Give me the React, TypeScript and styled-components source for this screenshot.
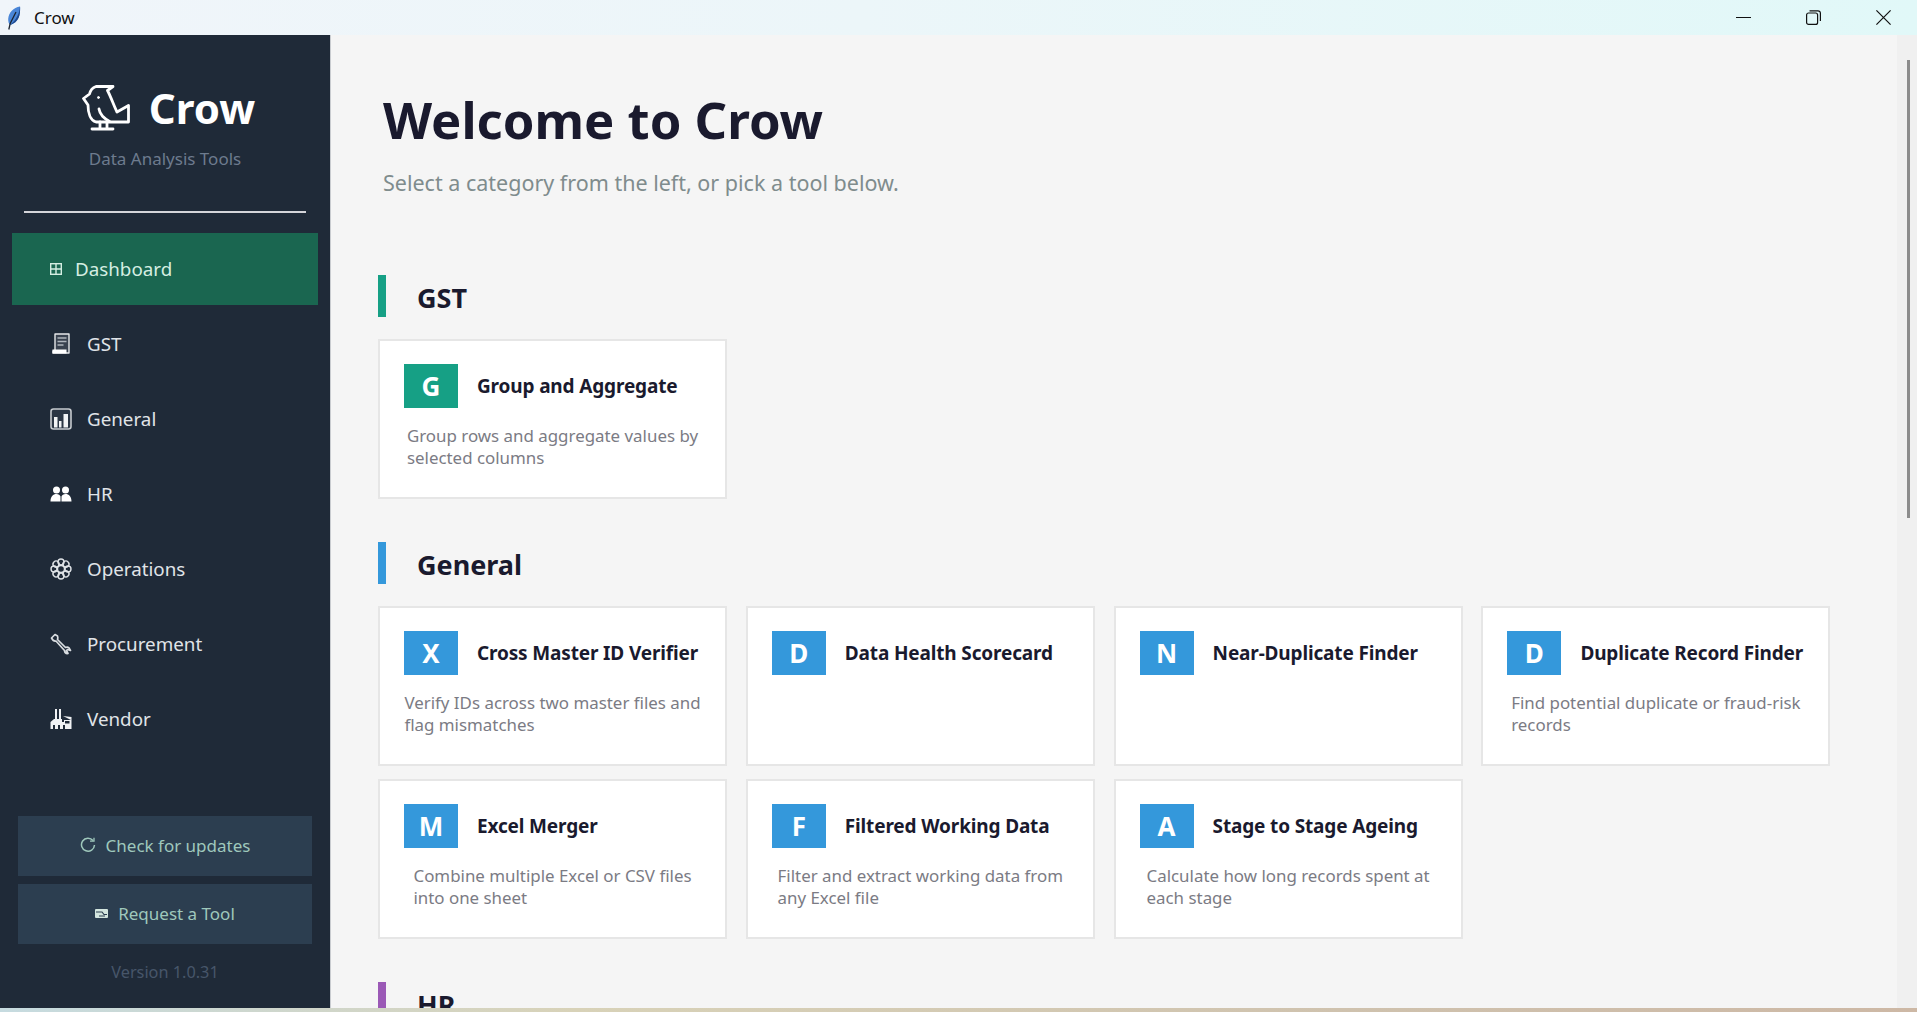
import React from 'react';
import styled, { createGlobalStyle } from 'styled-components';

const GlobalStyle = createGlobalStyle`
  html, body, #root {
    margin: 0;
    height: 100%;
  }

  body {
    overflow: hidden;
    font-family: "Noto Sans", "Open Sans", sans-serif;
    background: #f5f5f5;
  }
`;

const Window = styled.div`
  display: flex;
  flex-direction: column;
  width: 1917px;
  height: 1012px;
  overflow: hidden;
`;

const TitleBar = styled.div`
  display: flex;
  align-items: center;
  flex: 0 0 35px;
  padding-left: 7px;
  background: linear-gradient(90deg, #f0f5fa 0%, #ecf6f9 45%, #e1f8f8 100%);
`;

const WindowTitle = styled.span`
  margin-left: 13px;
  font-size: 17px;
  color: #111;
`;

const WindowControls = styled.div`
  display: flex;
  align-items: center;
  margin-left: auto;
  padding-right: 26px;
  gap: 55px;
`;

const Body = styled.div`
  display: flex;
  flex: 0 0 973px;
  min-height: 0;
`;

const Sidebar = styled.aside`
  display: flex;
  flex-direction: column;
  flex: 0 0 331px;
  box-sizing: border-box;
  background: #1f2a38;
  border-right: 1px solid #c9ccd0;
`;

const Brand = styled.div`
  display: flex;
  flex-direction: column;
  align-items: center;
  height: 176px;
  box-sizing: border-box;
  padding-top: 50px;
`;

const BrandRow = styled.div`
  display: flex;
  align-items: center;
  gap: 19px;
  height: 45px;
  padding-left: 7px;
`;

const BrandName = styled.span`
  font-size: 42px;
  font-weight: 700;
  line-height: 45px;
  color: #fff;
`;

const BrandTagline = styled.span`
  margin-top: 17px;
  font-size: 17px;
  line-height: 24px;
  color: #6d7b8e;
`;

const Divider = styled.div`
  flex: 0 0 2px;
  margin: 0 24px 20px;
  background: #d4d5da;
`;

const NavItem = styled.div<{ $active?: boolean }>`
  display: flex;
  align-items: center;
  flex: 0 0 72px;
  margin: 0 12px 3px;
  padding-left: 38px;
  gap: ${p => (p.$active ? '13px' : '15px')};
  font-size: 18.8px;
  color: ${p => (p.$active ? '#d5eee2' : '#e0e4e8')};
  background: ${p => (p.$active ? '#1a6650' : 'transparent')};
`;

const SidebarFooter = styled.div`
  display: flex;
  flex-direction: column;
  margin-top: auto;
  padding: 0 18px;
  gap: 8px;
`;

const FooterButton = styled.div`
  display: flex;
  align-items: center;
  justify-content: center;
  height: 60px;
  box-sizing: border-box;
  padding-bottom: 2px;
  gap: 10px;
  font-size: 17px;
  color: #9fc8bc;
  background: #2c3e50;
`;

const Version = styled.div`
  height: 40px;
  margin-bottom: 16px;
  font-size: 16.3px;
  line-height: 40px;
  text-align: center;
  color: #47566a;
`;

const Main = styled.main`
  flex: 1;
  min-width: 0;
  overflow: hidden;
  padding: 50px 0 0 47px;
  background: #f5f5f5;
`;

const PageTitle = styled.h1`
  margin: 0 0 0 5px;
  font-size: 50.8px;
  font-weight: 700;
  line-height: 70px;
  color: #1a1a2e;
`;

const PageSubtitle = styled.p`
  margin: 12px 0 76px 5px;
  font-size: 21.5px;
  line-height: 32px;
  color: #7f8c8d;
`;

const Section = styled.section`
  margin-bottom: 43.5px;
`;

const SectionHeader = styled.div<{ $accent: string }>`
  display: flex;
  align-items: center;
  height: 40px;
  margin-bottom: 21.5px;
  padding: 2px 0 0 31px;
  border-left: 8px solid ${p => p.$accent};
  font-size: 27px;
  font-weight: 700;
  color: #1a1a2e;
`;

const CardGrid = styled.div`
  display: grid;
  grid-template-columns: repeat(4, 349px);
  grid-auto-rows: 160px;
  column-gap: 18.8px;
  row-gap: 13px;
`;

const Card = styled.article`
  box-sizing: border-box;
  padding: 23px 24px;
  background: #fff;
  border: 2px solid #e6e6e6;
`;

const CardHead = styled.div`
  display: flex;
  align-items: center;
  gap: 19px;
`;

const CardBadge = styled.div<{ $color: string }>`
  display: flex;
  align-items: center;
  justify-content: center;
  flex: 0 0 54px;
  height: 44px;
  font-size: 26px;
  font-weight: 700;
  color: #fff;
  background: ${p => p.$color};
`;

const CardTitle = styled.h3`
  margin: 0;
  font-size: 19px;
  font-weight: 700;
  letter-spacing: -0.15px;
  white-space: nowrap;
  color: #1a1a2e;
`;

const CardDesc = styled.p`
  width: fit-content;
  margin: 17px auto 0;
  font-size: 16.9px;
  line-height: 22.5px;
  white-space: nowrap;
  color: #7b7b84;
`;

const ScrollTrack = styled.div`
  flex: 0 0 20px;
  box-sizing: border-box;
  padding: 25px 7px 0 10px;
  background: #f0f0f0;
`;

const ScrollThumb = styled.div`
  height: 458px;
  background: #8c8c8c;
`;

const DesktopEdge = styled.div`
  flex: 0 0 4px;
  background: linear-gradient(90deg, #c6dbe0 0%, #d8d2b8 30%, #cfc2ae 70%, #cdb8a5 100%);
`;

const Feather = () => (
  <svg width="14" height="24" viewBox="0 0 14 24">
    <path d="M13 .5C6.500 1.500 1.500 6.500 1.200 13c-.1 2.500.5 4.500 1.800 6 5.500-1.500 9-6 9.800-11.500.3-2.500.4-5 .2-7z" fill="#4a86d8" />
    <path d="M13 .5C12.500 7 9.500 14 3 19c5.500-1.500 9-6 9.800-11.500.3-2.500.4-5 .2-7z" fill="#1f4a8f" />
    <path d="M9 6L3.200 17.500 1.800 23.500" stroke="#1c2430" strokeWidth="1.300" fill="none" />
  </svg>
);

const Minimize = () => (
  <svg width="15" height="15" viewBox="0 0 15 15">
    <path d="M0 7.500H15" stroke="#111" strokeWidth="1" />
  </svg>
);

const Restore = () => (
  <svg width="15" height="15" viewBox="0 0 15 15" fill="none" stroke="#111" strokeWidth="1.200">
    <rect x=".6" y="3" width="11" height="11.400" rx="2" />
    <path d="M3.500 .8H12a2.400 2.400 0 0 1 2.400 2.400V11" />
  </svg>
);

const Close = () => (
  <svg width="15" height="15" viewBox="0 0 15 15">
    <path d="M.4 .4L14.600 14.600M14.600 .4L.4 14.600" stroke="#111" strokeWidth="1.200" />
  </svg>
);

const BirdLogo = () => (
  <svg width="48" height="46" viewBox="0 0 48 46" fill="none" stroke="#fff" strokeWidth="2.800" strokeLinejoin="round" strokeLinecap="round">
    <path d="M14 1.500H31L25.500 5.500C29 12 31.500 20 35 27L46.500 20.500V37H14C8.500 35.500 6 28 6 20L1.500 13.500L7.500 9C8.500 5 11 2.500 14 1.500Z" />
    <path d="M17 24C18 30 22 33 27.500 36.500" />
    <path d="M18 37V43.500M25 37V43.500M10 44H31" />
    <circle cx="16.500" cy="12.500" r="1" fill="#fff" strokeWidth="1" />
  </svg>
);

const DashboardIcon = () => (
  <svg width="12" height="12" viewBox="0 0 12 12" fill="none" stroke="#d5eee2" strokeWidth="1.400">
    <rect x=".7" y=".7" width="10.600" height="10.600" />
    <path d="M.7 6H11.300M6 .7V11.300" />
  </svg>
);

const LedgerIcon = () => (
  <svg width="22" height="22" viewBox="0 0 22 22">
    <path d="M5 1H19V20H3V18H5Z" fill="#39424f" stroke="#e6e8ea" strokeWidth="1.400" strokeLinejoin="round" />
    <path d="M7.500 5H16.500M7.500 8.500H16.500M7.500 12H13.500" stroke="#aeb5bc" strokeWidth="1.300" />
    <rect x="2.500" y="16.500" width="14" height="4" fill="#fff" />
  </svg>
);

const ChartIcon = () => (
  <svg width="22" height="22" viewBox="0 0 22 22">
    <rect x="1" y="1" width="20" height="20" rx="2.500" fill="#2b3644" stroke="#c6cace" strokeWidth="1.600" />
    <path d="M4 9H7.500V19.500H4ZM9 13H11.500V19.500H9ZM13.500 6H18V19.500H13.500Z" fill="#f2f4f5" />
  </svg>
);

const PeopleIcon = () => (
  <svg width="22" height="16" viewBox="0 0 22 16" fill="#fff">
    <circle cx="6.500" cy="4" r="3.500" />
    <circle cx="15.500" cy="4" r="3.500" />
    <path d="M.5 15.500C.5 10.500 3 8 6.500 8 8.500 8 10 9 10.500 10.500V15.500ZM11.500 15.500V10.500C12 9 13.500 8 15.500 8 19 8 21.500 10.500 21.500 15.500Z" />
  </svg>
);

const GearIcon = () => (
  <svg width="22" height="22" viewBox="0 0 22 22" fill="none" stroke="#dfe3e7" strokeWidth="1.400">
    {[0, 45, 90, 135, 180, 225, 270, 315].map(a => (
      <circle key={a} cx="11" cy="4" r="3" transform={`rotate(${a} 11 11)`} />
    ))}
    <circle cx="11" cy="11" r="3.500" />
  </svg>
);

const WrenchIcon = () => (
  <svg width="22" height="22" viewBox="0 0 22 22" fill="none" stroke="#d9dde1" strokeWidth="1.700" strokeLinejoin="round">
    <path d="M1.500 5L5 1.500 7.500 3C8 4.500 8 5.500 7.500 6.500L15.500 14.500C16.500 14 18 14 19 14.800L20.500 17.500 17.500 16.500 16.500 17.500 18 20.500C16 20.800 14.800 19.500 14.500 17.500L6 8C4.500 8.300 2.800 7.500 1.500 5Z" />
  </svg>
);

const FactoryIcon = () => (
  <svg width="22" height="22" viewBox="0 0 22 22" fill="#f0f2f4">
    <path d="M5 1H7V12H5ZM9 1H11V12H9Z" />
    <path d="M13 8L21.500 9V21H.5V14L4 11H12V14H14V12H21" />
    <path d="M15 13H19.500V15.500H15ZM3 17H5V21H3ZM8 17H10V21H8ZM13 17H15V21H13Z" fill="#1f2a38" />
  </svg>
);

const RefreshIcon = () => (
  <svg width="16" height="16" viewBox="0 0 16 16" fill="none" stroke="#9fc8bc" strokeWidth="1.500">
    <path d="M13 3.500A6.500 6.500 0 1 0 14.500 8" />
    <path d="M10 4.200H14V.8" strokeWidth="1.300" />
  </svg>
);

const MailIcon = () => (
  <svg width="13" height="9" viewBox="0 0 13 9">
    <rect width="13" height="9" rx="1" fill="#d4e6df" />
    <path d="M1 3H7L9 5.500H12M4 7H10" stroke="#2c3e50" strokeWidth="1.200" fill="none" />
  </svg>
);

const NAV_ITEMS = [
  { label: 'GST', icon: <LedgerIcon /> },
  { label: 'General', icon: <ChartIcon /> },
  { label: 'HR', icon: <PeopleIcon /> },
  { label: 'Operations', icon: <GearIcon /> },
  { label: 'Procurement', icon: <WrenchIcon /> },
  { label: 'Vendor', icon: <FactoryIcon /> },
];

interface Tool {
  letter: string;
  title: string;
  desc?: [string, string];
}

const GST_TOOLS: Tool[] = [
  { letter: 'G', title: 'Group and Aggregate', desc: ['Group rows and aggregate values by', 'selected columns'] },
];

const GENERAL_TOOLS: Tool[] = [
  { letter: 'X', title: 'Cross Master ID Verifier', desc: ['Verify IDs across two master files and', 'flag mismatches'] },
  { letter: 'D', title: 'Data Health Scorecard' },
  { letter: 'N', title: 'Near-Duplicate Finder' },
  { letter: 'D', title: 'Duplicate Record Finder', desc: ['Find potential duplicate or fraud-risk', 'records'] },
  { letter: 'M', title: 'Excel Merger', desc: ['Combine multiple Excel or CSV files', 'into one sheet'] },
  { letter: 'F', title: 'Filtered Working Data', desc: ['Filter and extract working data from', 'any Excel file'] },
  { letter: 'A', title: 'Stage to Stage Ageing', desc: ['Calculate how long records spent at', 'each stage'] },
];

const ToolCard: React.FC<{ tool: Tool; color: string }> = ({ tool, color }) => (
  <Card>
    <CardHead>
      <CardBadge $color={color}>{tool.letter}</CardBadge>
      <CardTitle>{tool.title}</CardTitle>
    </CardHead>
    {tool.desc && (
      <CardDesc>
        {tool.desc[0]}
        <br />
        {tool.desc[1]}
      </CardDesc>
    )}
  </Card>
);

export default function App() {
  return (
    <Window>
      <GlobalStyle />
      <TitleBar>
        <Feather />
        <WindowTitle>Crow</WindowTitle>
        <WindowControls>
          <Minimize />
          <Restore />
          <Close />
        </WindowControls>
      </TitleBar>

      <Body>
        <Sidebar>
          <Brand>
            <BrandRow>
              <BirdLogo />
              <BrandName>Crow</BrandName>
            </BrandRow>
            <BrandTagline>Data Analysis Tools</BrandTagline>
          </Brand>
          <Divider />

          <NavItem $active>
            <DashboardIcon />
            Dashboard
          </NavItem>
          {NAV_ITEMS.map(item => (
            <NavItem key={item.label}>
              {item.icon}
              {item.label}
            </NavItem>
          ))}

          <SidebarFooter>
            <FooterButton>
              <RefreshIcon />
              Check for updates
            </FooterButton>
            <FooterButton>
              <MailIcon />
              Request a Tool
            </FooterButton>
            <Version>Version 1.0.31</Version>
          </SidebarFooter>
        </Sidebar>

        <Main>
          <PageTitle>Welcome to Crow</PageTitle>
          <PageSubtitle>Select a category from the left, or pick a tool below.</PageSubtitle>

          <Section>
            <SectionHeader $accent="#16a085">GST</SectionHeader>
            <CardGrid>
              {GST_TOOLS.map(tool => (
                <ToolCard key={tool.title} tool={tool} color="#16a085" />
              ))}
            </CardGrid>
          </Section>

          <Section>
            <SectionHeader $accent="#3498db">General</SectionHeader>
            <CardGrid>
              {GENERAL_TOOLS.map(tool => (
                <ToolCard key={tool.title} tool={tool} color="#3498db" />
              ))}
            </CardGrid>
          </Section>

          <Section>
            <SectionHeader $accent="#9b59b6">HR</SectionHeader>
          </Section>
        </Main>

        <ScrollTrack>
          <ScrollThumb />
        </ScrollTrack>
      </Body>
      <DesktopEdge />
    </Window>
  );
}
